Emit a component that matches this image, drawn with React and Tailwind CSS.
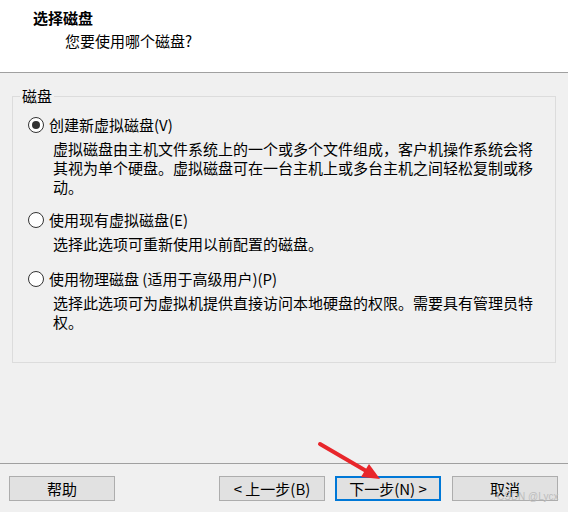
import React from 'react';

const font = { fontFamily: '"Noto Sans CJK SC", "Microsoft YaHei", sans-serif' };

function Radio({ checked }) {
  return (
    <svg width="16" height="16" viewBox="0 0 16 16" className="shrink-0">
      <circle cx="8" cy="8" r="7.5" fill="#fff" stroke="#333" strokeWidth="1" />
      {checked && <circle cx="8" cy="8" r="4" fill="#333" />}
    </svg>
  );
}

function Option({ checked, label, desc, className = '' }) {
  return (
    <div className={className}>
      <div className="flex items-center h-[20px]">
        <Radio checked={checked} />
        <span className="ml-[5px] leading-[20px]">{label}</span>
      </div>
      <p className="mt-[4px] ml-[25px] w-[482px] leading-[19px]">{desc}</p>
    </div>
  );
}

function Button({ children, primary }) {
  return (
    <button
      className={`h-[25px] w-[106px] bg-[#e1e1e1] text-[15px] leading-none text-black ${
        primary ? 'border-2 border-[#0078d7]' : 'border border-[#adadad]'
      }`}
    >
      {children}
    </button>
  );
}

export default function App() {
  return (
    <div className="relative w-[568px] h-[512px] bg-[#f0f0f0] text-[15px] text-black overflow-hidden" style={font}>
      {/* Header */}
      <div className="h-[73px] bg-white border-b border-[#a0a0a0] pt-[8px]">
        <h1 className="ml-[33px] font-bold leading-[20px]">选择磁盘</h1>
        <p className="ml-[65px] mt-[3px] leading-[20px]">您要使用哪个磁盘?</p>
      </div>

      {/* Body */}
      <div className="h-[391px] pt-[13px] px-[12px] border-b border-[#a0a0a0]">
        <fieldset className="h-[277px] border border-[#dcdcdc] px-[7px] pt-[9px]">
          <legend className="px-[2px] leading-[20px]">磁盘</legend>
          <div className="pl-[8px]">
            <Option
              checked
              label="创建新虚拟磁盘(V)"
              desc="虚拟磁盘由主机文件系统上的一个或多个文件组成，客户机操作系统会将其视为单个硬盘。虚拟磁盘可在一台主机上或多台主机之间轻松复制或移动。"
            />
            <Option
              className="mt-[14px]"
              label="使用现有虚拟磁盘(E)"
              desc="选择此选项可重新使用以前配置的磁盘。"
            />
            <Option
              className="mt-[16px]"
              label="使用物理磁盘 (适用于高级用户)(P)"
              desc="选择此选项可为虚拟机提供直接访问本地硬盘的权限。需要具有管理员特权。"
            />
          </div>
        </fieldset>
      </div>

      {/* Footer buttons */}
      <div className="flex items-center pt-[12px] pl-[9px]">
        <Button>帮助</Button>
        <div className="ml-[104px] flex">
          <Button>&lt; 上一步(B)</Button>
          <div className="ml-[10px]">
            <Button primary>下一步(N) &gt;</Button>
          </div>
          <div className="ml-[11px]">
            <Button>取消</Button>
          </div>
        </div>
      </div>

      {/* Annotation arrow */}
      <svg className="absolute left-0 top-0 pointer-events-none" width="568" height="512">
        <line x1="320" y1="444" x2="368" y2="472" stroke="#e8262b" strokeWidth="4" strokeLinecap="round" />
        <polygon points="380,479 361,477 369,464" fill="#e8262b" />
      </svg>

      {/* Watermark */}
      <span
        className="absolute left-[497px] top-[491px] whitespace-nowrap text-[10px] leading-[12px] text-[#bdbdbd]"
        style={{ fontFamily: '"Liberation Sans", Arial, sans-serif' }}
      >
        CSDN @Lycx
      </span>
    </div>
  );
}
